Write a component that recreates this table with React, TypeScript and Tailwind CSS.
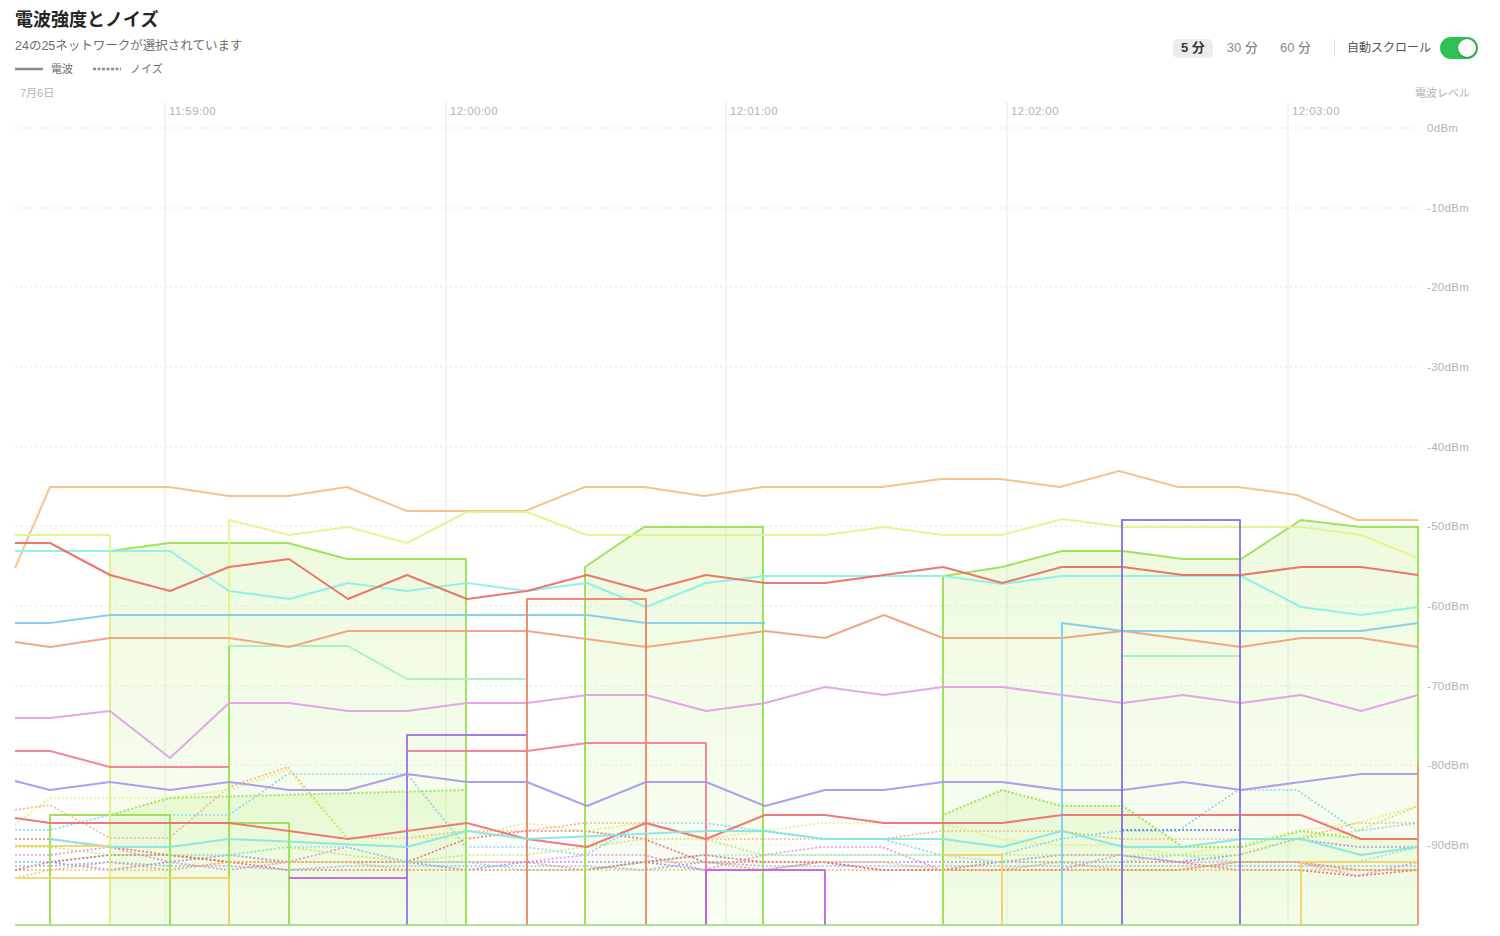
import React from "react";

type Series = { c: string; p: number[][]; fill?: boolean; dash?: boolean };

const pts = (p: number[][]) => p.map(([x, y]) => `${x},${y}`).join(" ");

const XN = [15, 50, 110, 169, 229, 288, 347, 407, 466, 525, 585, 644, 704, 763, 822, 882, 941, 1000, 1060, 1119, 1178, 1238, 1297, 1357, 1418];

const GRID_Y = [128, 208, 287, 367, 447, 526, 606, 686, 765, 845];
const DBM = ["0dBm", "-10dBm", "-20dBm", "-30dBm", "-40dBm", "-50dBm", "-60dBm", "-70dBm", "-80dBm", "-90dBm"];
const TIMES: [number, string][] = [
  [165, "11:59:00"],
  [446, "12:00:00"],
  [726, "12:01:00"],
  [1007, "12:02:00"],
  [1288, "12:03:00"],
];

const GREEN = "#9fe35a";

// green networks: outline + light fill
const areas: Series[] = [
  { c: GREEN, fill: true, p: [[110, 925], [110, 551], [169, 543], [288, 543], [347, 559], [466, 559], [466, 925]] },
  { c: GREEN, fill: true, p: [[585, 925], [585, 567], [644, 527], [763, 527], [763, 925]] },
  { c: GREEN, fill: true, p: [[943, 925], [943, 576], [1002, 567], [1062, 551], [1123, 551], [1183, 559], [1241, 559], [1301, 520], [1361, 527], [1418, 527], [1418, 925]] },
  { c: GREEN, p: [[50, 925], [50, 815], [170, 815], [170, 925]] },
  { c: GREEN, p: [[170, 823], [289, 823], [289, 925]] },
  { c: GREEN, p: [[229, 925], [229, 646]] },
  { c: GREEN, fill: true, dash: true, p: [[110, 925], [110, 815], [169, 798], [466, 790], [466, 925]] },
  { c: GREEN, fill: true, dash: true, p: [[943, 925], [943, 815], [1002, 790], [1062, 806], [1123, 806], [1183, 847], [1241, 847], [1301, 831], [1361, 839], [1418, 839], [1418, 925]] },
];

const noise: { c: string; y: number[] }[] = [
  { c: "#f6b07a", y: [810, 805, 838, 838, 787, 767, 838, 838, 831, 831, 823, 823, 839, 839, 839, 839, 831, 831, 831, 839, 839, 839, 839, 823, 823] },
  { c: "#e6ec74", y: [825, 798, 798, 798, 790, 770, 838, 838, 838, 823, 831, 823, 839, 831, 823, 823, 823, 839, 845, 845, 855, 845, 831, 823, 806] },
  { c: "#7fd3f0", y: [830, 830, 815, 815, 815, 774, 774, 774, 847, 847, 855, 823, 823, 831, 839, 839, 855, 855, 839, 831, 831, 790, 790, 831, 823] },
  { c: "#ee6a6a", y: [839, 839, 847, 855, 862, 862, 862, 862, 839, 831, 831, 839, 862, 862, 862, 870, 870, 862, 862, 862, 862, 870, 870, 876, 870] },
  { c: "#e48ae6", y: [855, 855, 847, 862, 870, 862, 847, 862, 862, 862, 855, 855, 870, 855, 847, 847, 870, 870, 870, 855, 862, 862, 862, 876, 862] },
  { c: "#a48ae6", y: [862, 862, 870, 862, 855, 862, 862, 862, 870, 862, 862, 862, 870, 870, 862, 862, 862, 862, 855, 855, 862, 855, 839, 847, 847] },
  { c: "#f2a56b", y: [870, 870, 862, 870, 862, 862, 862, 862, 862, 862, 870, 862, 862, 870, 870, 870, 870, 870, 862, 870, 870, 870, 870, 870, 870] },
  { c: "#c5e36a", y: [847, 847, 855, 855, 855, 847, 855, 862, 855, 855, 847, 839, 839, 855, 855, 855, 855, 855, 855, 855, 855, 855, 839, 831, 806] },
  { c: "#86e8d8", y: [862, 862, 855, 855, 855, 847, 847, 862, 862, 870, 870, 862, 855, 855, 855, 855, 855, 862, 862, 862, 855, 862, 862, 862, 847] },
  { c: "#e46e6e", y: [870, 862, 855, 855, 862, 870, 870, 870, 870, 870, 870, 862, 855, 862, 862, 870, 870, 870, 870, 870, 870, 862, 862, 870, 870] },
  { c: "#efc35e", y: [878, 870, 870, 870, 862, 862, 862, 870, 870, 870, 870, 870, 870, 870, 862, 862, 870, 870, 870, 870, 870, 862, 862, 870, 870] },
  { c: "#8fb2ee", y: [866, 866, 862, 866, 866, 870, 866, 866, 866, 866, 866, 870, 862, 866, 866, 866, 866, 866, 866, 866, 866, 866, 866, 866, 866] },
];

const lines: Series[] = [
  { c: "#f7bd86", p: [[15, 568], [50, 487], [169, 487], [229, 496], [288, 496], [347, 487], [407, 511], [525, 511], [585, 487], [644, 487], [704, 496], [763, 487], [882, 487], [941, 479], [1000, 479], [1060, 487], [1119, 471], [1178, 487], [1238, 487], [1297, 495], [1357, 520], [1418, 520]] },
  { c: "#e4f38c", p: [[15, 535], [110, 535], [110, 925]] },
  { c: "#e4f38c", p: [[229, 646], [229, 520], [289, 535], [348, 527], [407, 543], [467, 512], [527, 512], [587, 535], [825, 535], [884, 527], [943, 535], [1002, 535], [1062, 519], [1123, 527], [1301, 527], [1361, 535], [1418, 558]] },
  { c: "#a6efbf", p: [[229, 646], [348, 646], [407, 679], [526, 679]] },
  { c: "#f2a07c", p: [[15, 642], [50, 647], [110, 638], [229, 638], [289, 647], [348, 631], [527, 631], [646, 647], [765, 631], [825, 638], [884, 615], [943, 638], [1062, 638], [1123, 631], [1241, 647], [1301, 638], [1361, 638], [1418, 647]] },
  { c: "#80caea", p: [[15, 623], [50, 623], [110, 615], [587, 615], [646, 623], [765, 623]] },
  { c: "#80caea", p: [[1062, 925], [1062, 623], [1123, 631], [1361, 631], [1418, 623]] },
  { c: "#a6efbf", p: [[1123, 656], [1241, 656]] },
  { c: "#8af0e4", p: [[15, 551], [170, 551], [229, 591], [289, 599], [348, 583], [407, 591], [467, 583], [527, 591], [587, 583], [646, 607], [706, 583], [765, 576], [943, 576], [1002, 584], [1062, 576], [1241, 576], [1301, 607], [1361, 615], [1418, 607]] },
  { c: "#ec6b5e", p: [[15, 543], [50, 543], [110, 575], [170, 591], [229, 567], [289, 559], [348, 599], [407, 575], [467, 599], [527, 591], [587, 575], [646, 591], [706, 575], [765, 583], [825, 583], [884, 575], [943, 567], [1002, 583], [1062, 567], [1123, 567], [1183, 575], [1241, 575], [1301, 567], [1361, 567], [1418, 575]] },
  { c: "#e29ee6", p: [[15, 718], [50, 718], [110, 711], [170, 758], [229, 703], [289, 703], [348, 711], [407, 711], [467, 703], [527, 703], [587, 695], [646, 695], [706, 711], [765, 703], [825, 687], [884, 695], [943, 687], [1002, 687], [1062, 695], [1123, 703], [1183, 695], [1241, 703], [1301, 695], [1361, 711], [1418, 695]] },
  { c: "#f27d8e", p: [[15, 751], [50, 751], [110, 767], [229, 767]] },
  { c: "#9a72e6", p: [[407, 925], [407, 735], [527, 735]] },
  { c: "#f27d8e", p: [[407, 751], [527, 751], [587, 743], [706, 743], [706, 925]] },
  { c: "#ef8466", p: [[527, 925], [527, 599], [646, 599], [646, 925]] },
  { c: "#a995ee", p: [[15, 781], [50, 790], [110, 782], [170, 790], [229, 782], [289, 790], [348, 790], [407, 774], [467, 782], [527, 782], [587, 806], [646, 782], [706, 782], [765, 806], [825, 790], [884, 790], [943, 782], [1002, 782], [1062, 790], [1123, 790], [1183, 782], [1241, 790], [1301, 782], [1361, 774], [1418, 774]] },
  { c: "#ee6f6f", p: [[15, 818], [50, 823], [229, 823], [289, 831], [348, 839], [407, 831], [467, 823], [527, 839], [587, 847], [646, 823], [706, 839], [765, 815], [825, 815], [884, 823], [1002, 823], [1062, 815], [1301, 815], [1361, 839], [1418, 839]] },
  { c: "#84e6df", p: [[50, 839], [110, 847], [170, 847], [229, 839], [407, 847], [467, 831], [527, 839], [706, 831], [765, 831], [825, 839], [943, 839], [1002, 847], [1062, 831], [1123, 847], [1183, 847], [1241, 839], [1301, 839], [1361, 855], [1418, 847]] },
  { c: "#f2d36b", p: [[15, 846], [110, 846]] },
  { c: "#f2d36b", p: [[15, 878], [229, 878], [229, 925]] },
  { c: "#f2d36b", p: [[943, 855], [1002, 855], [1002, 925]] },
  { c: "#f2d36b", p: [[1301, 925], [1301, 862], [1418, 862]] },
  { c: "#c862dc", p: [[289, 878], [407, 878]] },
  { c: "#c862dc", p: [[706, 925], [706, 870], [825, 870], [825, 925]] },
  { c: "#8a6ee0", p: [[1122, 925], [1122, 520], [1240, 520], [1240, 925]] },
  { c: "#f0957a", p: [[1418, 765], [1418, 925]] },
];

function Chart() {
  return (
    <svg width={1500} height={836} viewBox="0 100 1500 836" className="block">
      <defs>
        <linearGradient id="gfill" x1="0" y1="0" x2="0" y2="1">
          <stop offset="0" stopColor="#c4f08f" stopOpacity="0.3" />
          <stop offset="1" stopColor="#d6f5b6" stopOpacity="0.16" />
        </linearGradient>
      </defs>
      {GRID_Y.map((y, i) => (
        <g key={y}>
          <line x1={15} x2={1418} y1={y} y2={y} stroke="#e3e3e3" strokeDasharray="2 3" />
          <text x={1427} y={y + 4} fontSize={11.5} fill="#b3b3b3" fontFamily="'Liberation Sans', sans-serif" letterSpacing="0.3">
            {DBM[i]}
          </text>
        </g>
      ))}
      {TIMES.map(([x, t]) => (
        <g key={t}>
          <line x1={x} x2={x} y1={102} y2={925} stroke="#e6e6e6" />
          <text x={x + 4} y={115} fontSize={11.5} fill="#b3b3b3" fontFamily="'Liberation Sans', sans-serif" letterSpacing="0.4">
            {t}
          </text>
        </g>
      ))}
      {areas
        .filter((s) => s.fill)
        .map((s, i) => (
          <polygon key={"a" + i} points={pts(s.p)} fill="url(#gfill)" stroke="none" />
        ))}
      {noise.map((n, i) => (
        <polyline
          key={"n" + i}
          points={pts(n.y.map((y, j) => [XN[j], y]))}
          fill="none"
          stroke={n.c}
          strokeWidth={1.7}
          strokeDasharray="2 2"
          opacity={0.9}
        />
      ))}
      <polyline points="1122,830 1240,830" fill="none" stroke="#5f6fe0" strokeWidth={1.7} strokeDasharray="2 2" />
      {areas.map((s, i) => (
        <polyline
          key={"al" + i}
          points={pts(s.p)}
          fill="none"
          stroke={s.c}
          strokeWidth={2}
          strokeDasharray={s.dash ? "2 2" : undefined}
        />
      ))}
      {lines.map((s, i) => (
        <polyline
          key={"l" + i}
          points={pts(s.p)}
          fill="none"
          stroke={s.c}
          strokeWidth={2}
          strokeLinejoin="round"
          opacity={0.92}
        />
      ))}
      <line x1={15} x2={1418} y1={925} y2={925} stroke="#8fdc6a" strokeWidth={1.5} />
    </svg>
  );
}

export default function App() {
  return (
    <div className="w-[1500px] h-[936px] bg-white overflow-hidden font-['Liberation_Sans','Noto_Sans_CJK_JP',sans-serif]">
      <div className="h-[100px] flex flex-col">
        <div className="flex justify-between items-start px-[15px] pt-[9px]">
          <div>
            <h1 className="text-[18px] leading-[22px] font-bold text-[#262626]">電波強度とノイズ</h1>
            <p className="mt-[7px] text-[12.5px] leading-[16px] text-[#6e6e6e]">24の25ネットワークが選択されています</p>
            <div className="mt-[8px] flex items-center h-[14px] text-[11px] text-[#6e6e6e]">
              <svg width="28" height="4" className="mr-[8px]">
                <line x1="0" x2="28" y1="2" y2="2" stroke="#8c8c8c" strokeWidth="2.5" />
              </svg>
              <span>電波</span>
              <svg width="28" height="4" className="ml-[20px] mr-[9px]">
                <line x1="0" x2="28" y1="2" y2="2" stroke="#8c8c8c" strokeWidth="2.5" strokeDasharray="3 1.5" />
              </svg>
              <span>ノイズ</span>
            </div>
          </div>
          <div className="flex items-center mt-[28px] mr-[7px] text-[13px]">
            <div className="flex items-center gap-[6px]">
              <span className="h-[19px] px-[8px] flex items-center rounded-[5px] bg-[#ececec] text-[#3a3a3a] font-semibold">5 分</span>
              <span className="h-[19px] px-[8px] flex items-center text-[#8a8a8a] font-medium">30 分</span>
              <span className="h-[19px] px-[8px] flex items-center text-[#8a8a8a] font-medium">60 分</span>
            </div>
            <div className="w-px h-[18px] bg-[#e2e2e2] ml-[15px] mr-[12px]" />
            <span className="text-[12px] text-[#555]">自動スクロール</span>
            <div className="ml-[9px] w-[38px] h-[22px] rounded-full bg-[#2ec254] flex items-center justify-end px-[2px]">
              <div className="w-[18px] h-[18px] rounded-full bg-white shadow-[0_0_0_0.5px_rgba(0,0,0,0.15),0_1px_2px_rgba(0,0,0,0.25)]" />
            </div>
          </div>
        </div>
        <div className="mt-[10px] flex justify-between pl-[20px] pr-[30px] text-[11px] leading-[14px] text-[#b3b3b3]">
          <span>7月6日</span>
          <span>電波レベル</span>
        </div>
      </div>
      <Chart />
    </div>
  );
}
